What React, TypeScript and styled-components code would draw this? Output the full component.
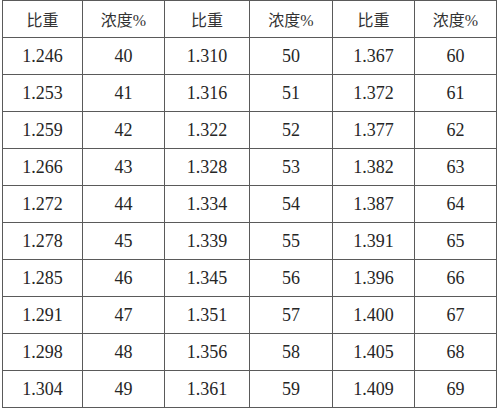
import React from 'react';
import styled, { createGlobalStyle } from "styled-components";

const GlobalStyle = createGlobalStyle`
    body {
        margin: 0;
        background-color: #fff;
    }
`;

const TableGrid = styled.div`
    display: grid;
    grid-template-columns: 79px 81px 84px 82px 81px 81px;
    grid-auto-rows: 36px;
    gap: 1px;
    padding: 1px;
    margin-left: 2px;
    width: max-content;
    background-color: #5a5a5a;
`;

const Cell = styled.div`
    display: flex;
    align-items: center;
    justify-content: center;
    background-color: #fff;
    color: #262626;
    font-family: "Liberation Serif", "Times New Roman", serif;
    font-size: 18px;
    padding-top: 1px;
`;

const HeadCell = styled(Cell)`
    font-family: "Liberation Serif", "Noto Sans CJK SC", serif;
    font-size: 16px;
    padding-top: 0;
    color: #333;
`;

const base: [string[], number][] = [
    [["1.246", "1.253", "1.259", "1.266", "1.272", "1.278", "1.285", "1.291", "1.298", "1.304"], 40],
    [["1.310", "1.316", "1.322", "1.328", "1.334", "1.339", "1.345", "1.351", "1.356", "1.361"], 50],
    [["1.367", "1.372", "1.377", "1.382", "1.387", "1.391", "1.396", "1.400", "1.405", "1.409"], 60],
];

const rows = Array.from({ length: 10 }, (_, i) =>
    base.map(([gs, start]) => [gs[i], start + i] as [string, number])
);

function App() {
    return (
        <>
            <GlobalStyle />
            <TableGrid>
                {[0, 1, 2].map(k => (
                    <React.Fragment key={"h" + k}>
                        <HeadCell>比重</HeadCell>
                        <HeadCell>浓度%</HeadCell>
                    </React.Fragment>
                ))}
                {rows.map((row, r) =>
                    row.map(([g, c], k) => (
                        <React.Fragment key={r + "-" + k}>
                            <Cell>{g}</Cell>
                            <Cell>{c}</Cell>
                        </React.Fragment>
                    ))
                )}
            </TableGrid>
        </>
    );
}

export default App;
